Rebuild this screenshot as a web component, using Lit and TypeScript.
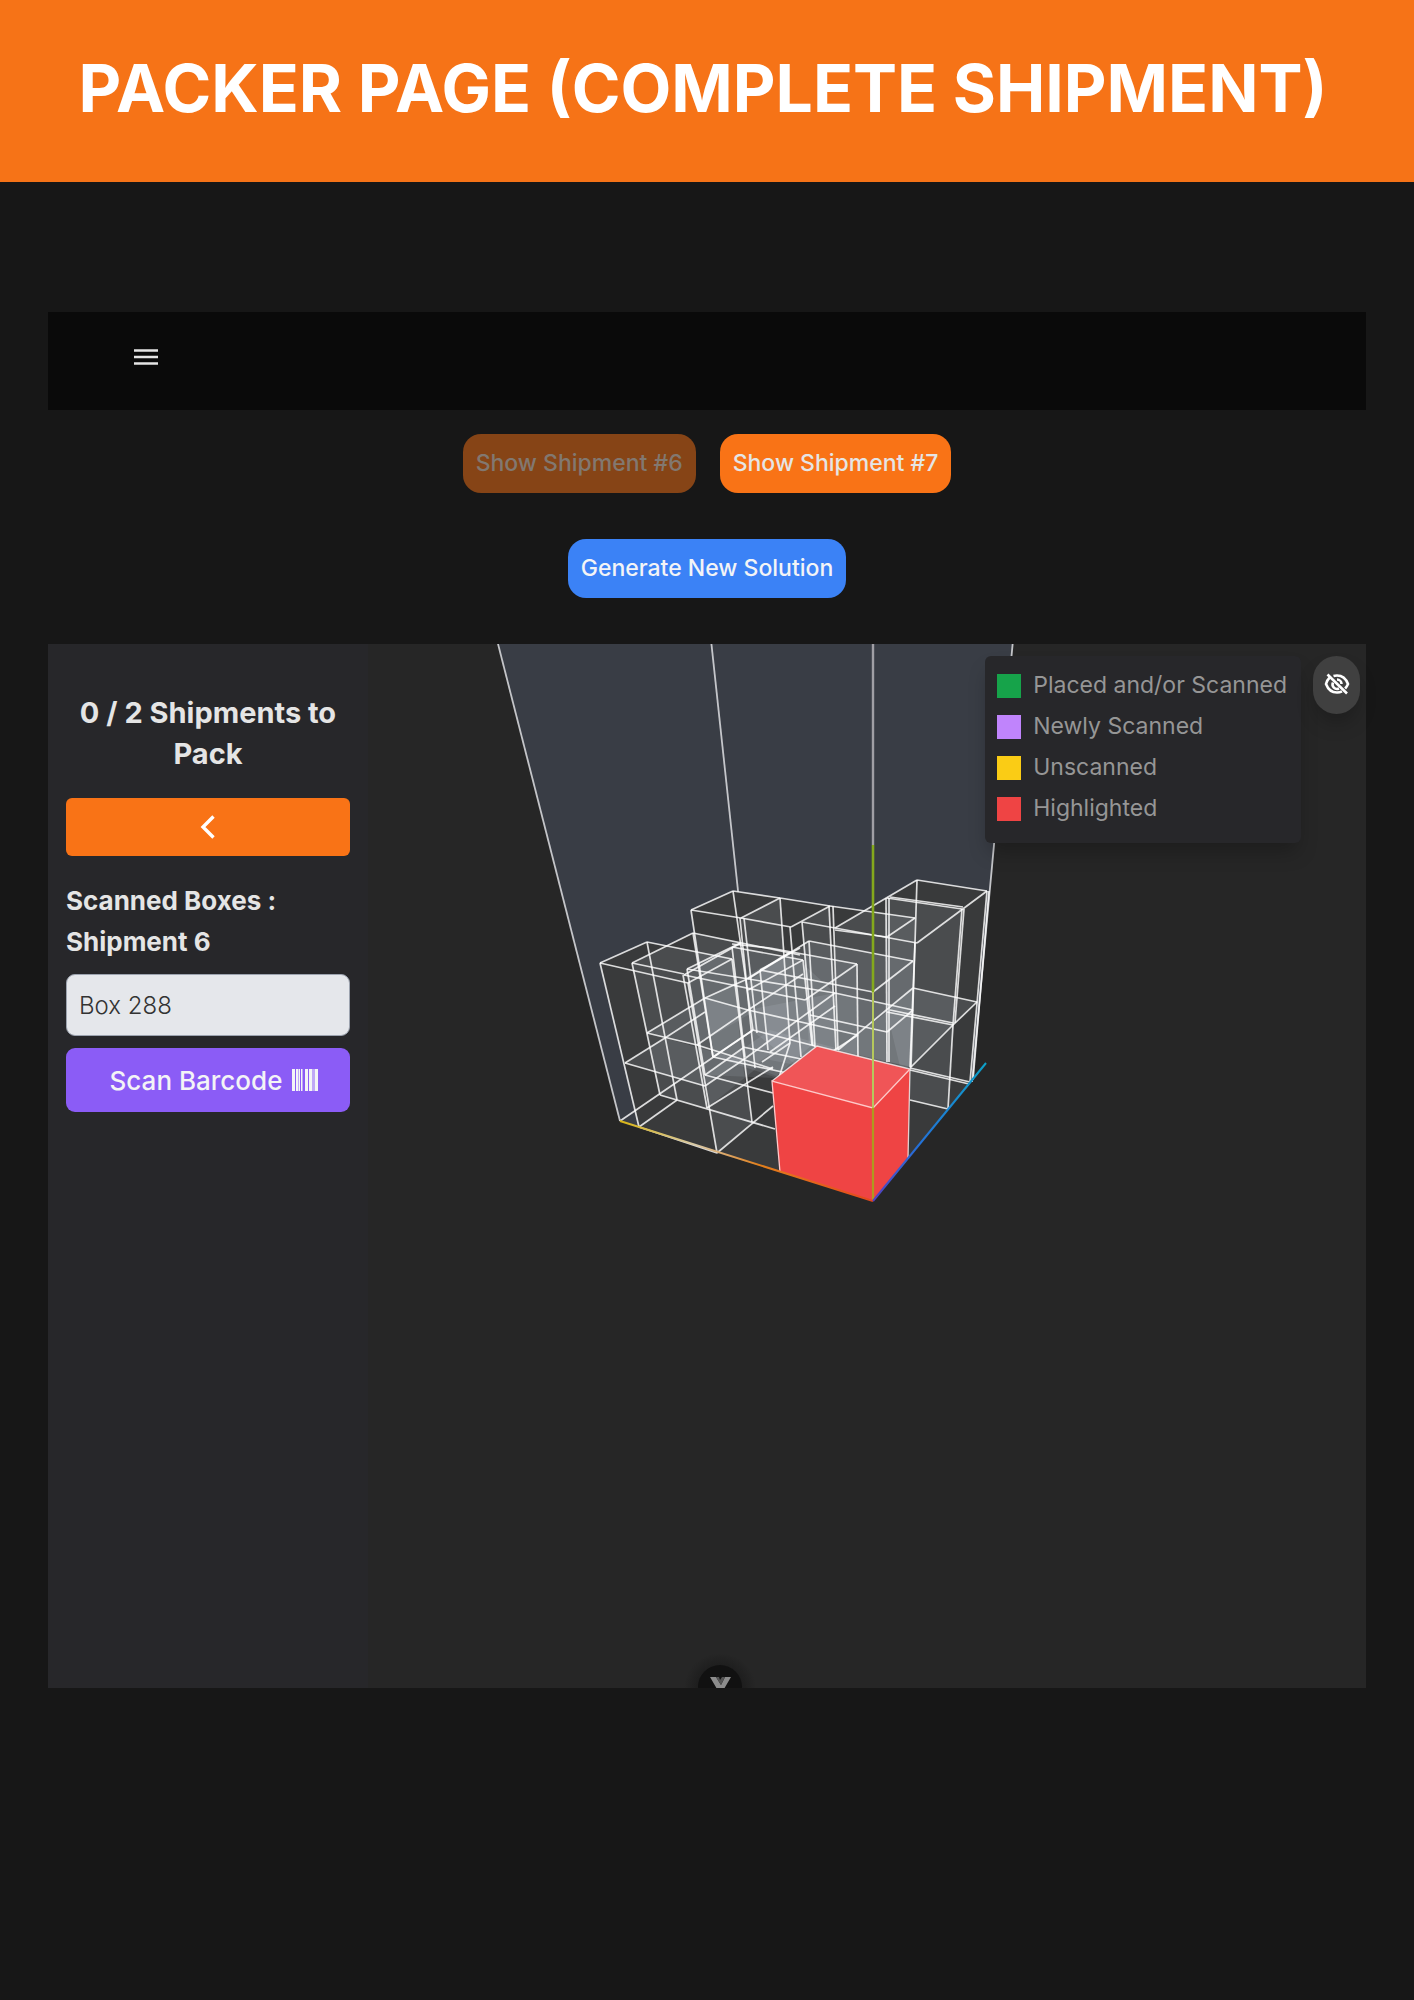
import { LitElement, html, svg, css } from "lit";
import { customElement, state } from "lit/decorators.js";

type Segment = [number, number, number, number];

/** Shades of the container walls, drawn behind every box. */
const WALLS = "497,640 1013,640 972,1082 948,1109 873,1201 620,1121";

/** Outline of each translucent box in scene coordinates. */
const BOXES: string[] = [
  "600,963 647,942 732,959 742,1060 705,1086 625,1063",
  "625,1063 665,1038 742,1060 752,1122 717,1153 639,1127",
  "632,963 693,933 743,943 753,1012 697,1045 647,1033",
  "647,1033 705,998 748,1010 757,1068 707,1108 660,1095",
  "687,969 732,947 803,960 812,1045 774,1078 705,1075",
  "705,1075 770,1030 836,1048 836,1060 780,1172 717,1153",
  "691,910 733,891 780,898 790,1042 752,1066 713,1057",
  "741,918 780,898 830,906 836,1048 800,1068 755,1033",
  "802,922 830,906 915,918 911,1067 888,1062 809,1046",
  "835,928 887,898 962,909 953,1025 911,1067 838,1050",
  "887,898 917,880 987,891 977,1002 953,1025 887,1012",
  "887,1012 913,988 977,1002 971,1082 948,1109 908,1100",
  "838,1050 887,1012 953,1025 948,1109 908,1159 873,1100",
  "760,970 809,941 913,961 911,1067 873,1080 770,1060",
  "748,982 790,952 857,964 858,1057 805,1080 755,1063",
  "705,998 790,952 835,993 838,1050 790,1082 713,1057",
  "748,1010 835,993 913,1010 911,1067 790,1082 757,1068",
];

const WALL_EDGES: Segment[] = [
  [497, 640, 620, 1121],
  [711, 640, 753, 1030],
  [1013, 640, 972, 1082],
];

const EDGES: Segment[] = [
  // front left stack
  [600, 963, 647, 942], [647, 942, 732, 959], [732, 959, 688, 983], [688, 983, 600, 963],
  [600, 963, 639, 1127], [647, 942, 677, 1100], [732, 959, 752, 1122], [688, 983, 717, 1153],
  [639, 1127, 677, 1100], [639, 1127, 717, 1153], [717, 1153, 773, 1106],
  [625, 1063, 705, 1086], [625, 1063, 665, 1038], [705, 1086, 743, 1060],
  // second stack
  [632, 963, 693, 933], [693, 933, 800, 955], [632, 963, 684, 974], [684, 975, 741, 943],
  [632, 963, 660, 1095], [693, 933, 713, 1057], [683, 975, 707, 1108],
  [660, 1095, 775, 1129], [647, 1033, 697, 1045], [697, 1045, 773, 1069],
  [647, 1033, 705, 998], [705, 998, 745, 980], [745, 980, 790, 952],
  [665, 1038, 705, 1012], [707, 1108, 773, 1067],
  [620, 1121, 753, 1030],
  // centre
  [687, 969, 732, 947], [687, 969, 835, 993], [684, 975, 805, 1000],
  [687, 969, 705, 1075], [732, 947, 740, 943], [732, 947, 803, 960], [732, 947, 745, 1057],
  [705, 998, 748, 1010], [748, 1010, 858, 1035], [697, 1045, 748, 1010], [748, 1010, 803, 974],
  [713, 1057, 753, 1030], [753, 1030, 815, 1046], [743, 1047, 806, 1060], [713, 1057, 787, 1073],
  [705, 1075, 773, 1093], [705, 1075, 743, 1048], [743, 1060, 835, 993],
  [760, 970, 800, 948], [760, 970, 768, 1050],
  // back row
  [691, 910, 733, 891], [733, 891, 780, 898], [780, 898, 830, 906],
  [691, 910, 741, 918], [741, 918, 791, 927], [741, 918, 780, 898], [791, 927, 830, 906],
  [691, 910, 713, 1057], [733, 891, 753, 1030], [740, 918, 755, 1068], [744, 918, 757, 1033],
  [780, 898, 790, 1043], [790, 927, 801, 1057], [802, 922, 813, 1046],
  [830, 906, 915, 918], [915, 918, 887, 937], [835, 930, 887, 937], [802, 922, 835, 928],
  [829, 906, 836, 1050], [833, 906, 838, 1050],
  // centre right
  [809, 941, 913, 961], [809, 941, 748, 979], [913, 961, 873, 992], [873, 992, 760, 970],
  [770, 948, 857, 964], [732, 944, 770, 948], [857, 964, 805, 1000], [857, 964, 858, 1057],
  [803, 960, 812, 1045], [803, 960, 748, 990], [809, 941, 815, 1047],
  [835, 993, 913, 1010], [913, 1010, 887, 1032],
  [887, 1032, 810, 1015], [858, 1035, 800, 1072], [913, 988, 838, 1050],
  [770, 1052, 835, 1006], [775, 1090, 790, 1043], [790, 1043, 762, 1062],
  // tall stack on the right
  [917, 880, 987, 891], [987, 891, 917, 943], [917, 880, 835, 928], [835, 928, 917, 943],
  [887, 898, 962, 909], [890, 897, 963, 907],
  [917, 880, 911, 1067], [915, 943, 910, 1067],
  [886, 898, 887, 1062], [889, 898, 889, 1062],
  [987, 891, 970, 1082], [989, 891, 973, 1080], [962, 909, 953, 1025], [964, 909, 955, 1023],
  [953, 1025, 948, 1109],
  [913, 988, 977, 1002], [887, 1012, 953, 1025], [890, 1010, 953, 1023],
  [977, 1002, 953, 1025], [953, 1025, 910, 1068],
  [910, 1068, 970, 1082], [910, 1070, 969, 1084], [910, 1100, 948, 1109],
];

@customElement("shipment-scene")
class ShipmentScene extends LitElement {
  static styles = css`
    :host { display: block; }
    .scene { display: block; width: 100%; height: auto; }
    .wall { fill: #393d45; }
    .mask { fill: #262626; }
    .box { fill: #dfe9f2; fill-opacity: 0.1; }
    .edge { stroke: #fff; stroke-opacity: 0.82; stroke-width: 1.7; }
    .wall-edge { stroke: #d4d5d8; stroke-opacity: 0.9; stroke-width: 1.8; }
    .axis { fill: none; stroke-width: 2; }
  `;

  private line(s: Segment, name: string) {
    return svg`<line class=${name} x1=${s[0]} y1=${s[1]} x2=${s[2]} y2=${s[3]}></line>`;
  }

  render() {
    return html`
      <svg class="scene" viewBox="368 644 998 1044" role="img" aria-label="Packing view">
        <defs>
          <linearGradient id="x-axis" gradientUnits="userSpaceOnUse" x1="873" y1="1201" x2="620" y2="1121">
            <stop offset="0" stop-color="#e4461c" />
            <stop offset="0.45" stop-color="#e2801c" />
            <stop offset="0.7" stop-color="#d8c9a8" />
            <stop offset="1" stop-color="#d8b414" />
          </linearGradient>
          <linearGradient id="z-axis" gradientUnits="userSpaceOnUse" x1="873" y1="1201" x2="986" y2="1063">
            <stop offset="0" stop-color="#5440c0" />
            <stop offset="0.4" stop-color="#2470d8" />
            <stop offset="1" stop-color="#0ca0c8" />
          </linearGradient>
          <radialGradient id="badge-glow">
            <stop offset="0.55" stop-color="#1c1c1c" />
            <stop offset="1" stop-color="#1c1c1c" stop-opacity="0" />
          </radialGradient>
        </defs>
        <polygon class="wall" points=${WALLS}></polygon>
        ${WALL_EDGES.map((s) => this.line(s, "wall-edge"))}
        <line x1="873" y1="640" x2="873" y2="845" stroke="#a09fa5" stroke-width="2.4" />
        ${BOXES.map((p) => svg`<polygon class="mask" points=${p}></polygon>`)}
        ${BOXES.map((p) => svg`<polygon class="box" points=${p}></polygon>`)}
        ${EDGES.map((s) => this.line(s, "edge"))}
        <polygon fill="#ef4444" points="772,1081 873,1108 910,1069 908,1159 873,1201 780,1172" />
        <polygon fill="#f05557" points="772,1081 817,1046 910,1069 873,1108" />
        <polyline points="772,1081 817,1046 910,1069 908,1159" fill="none" stroke="#fff" stroke-opacity="0.75" stroke-width="1.3" />
        <polyline points="780,1172 772,1081 873,1108 910,1069" fill="none" stroke="#ffc9c9" stroke-width="1.3" />
        <line x1="873" y1="845" x2="873" y2="992" stroke="#84a91c" stroke-width="2.6" />
        <line x1="873" y1="992" x2="873" y2="1108" stroke="#b5c85c" stroke-width="2" />
        <line x1="873" y1="1108" x2="873" y2="1200" stroke="#ae9a1e" stroke-width="2.2" />
        <line class="axis" x1="873" y1="1201" x2="620" y2="1121" stroke="url(#x-axis)" />
        <line class="axis" x1="873" y1="1201" x2="986" y2="1063" stroke="url(#z-axis)" />
        <circle cx="720" cy="1689" r="36" fill="url(#badge-glow)" />
        <circle cx="720" cy="1687" r="22" fill="#111" />
        <path d="M710 1677h6l5 8 4-8h6l-7 12h-7z" fill="#8c8c8c" />
        <path d="M716 1677l5 8 4-8h-3l-2 3-1-3z" fill="#555" />
      </svg>
    `;
  }
}

@customElement("app-root")
class AppRoot extends LitElement {
  static styles = css`
    :host {
      display: block;
      min-height: 100vh;
      background: #171717;
      color: #e5e5e5;
      font-family: Inter, "Liberation Sans", sans-serif;
      font-size: 24px;
      line-height: 41px;
    }
    * { box-sizing: border-box; }
    h1, h2, h3, ul, p { margin: 0; padding: 0; }
    button, input { font: inherit; color: inherit; border: 0; margin: 0; }
    button { cursor: pointer; }
    .banner {
      background: #f67317;
      color: #fff;
      padding: 44px 56px 50px 48px;
      text-align: center;
    }
    .banner-title { font-size: 66px; line-height: 88px; font-weight: 700; white-space: nowrap; }
    .page { padding: 130px 48px 0; }
    .navbar { background: #0a0a0a; padding: 30px 84px 38px; display: flex; }
    .menu { background: none; padding: 0; width: 28px; height: 30px; display: grid; place-items: center; }
    .actions { display: flex; justify-content: center; flex-wrap: wrap; gap: 24px; }
    .shipments { padding: 24px 0 46px; }
    .generate { padding-bottom: 46px; }
    .pill { height: 59px; padding: 0 13px; border-radius: 18px; font-size: 23px; font-weight: 500; background: #f97316; }
    .pill:disabled { background: #864416; color: #827870; }
    .pill.blue { background: #3b82f6; color: #f3f4f6; }
    .workspace { display: grid; grid-template-columns: 320px minmax(0, 1fr); background: #262626; }
    .sidebar { background: #27272a; padding: 48px 18px; }
    .progress { font-size: 29px; font-weight: 700; text-align: center; }
    .back {
      display: grid; place-items: center; width: 100%; height: 58px; margin: 24px 0;
      border-radius: 6px; background: #f97316; color: #fff; padding: 0;
    }
    .scanned-title { font-size: 26px; font-weight: 700; }
    .box-input {
      display: block; width: 100%; height: 62px; margin: 12px 0; padding: 0 12px;
      background: #e5e7eb; border: 1px solid #9ca3af; border-radius: 9px; color: #333; font-weight: 300;
    }
    .scan {
      display: flex; align-items: center; justify-content: center; gap: 10px;
      width: 100%; height: 64px; padding: 0 0 0 12px; border-radius: 9px;
      background: #8b5cf6; color: #f3f4f6; font-size: 26px; font-weight: 500;
    }
    .viewport { position: relative; }
    .overlay { position: absolute; top: 12px; right: 6px; display: flex; align-items: flex-start; gap: 12px; }
    .legend {
      list-style: none; padding: 9px 14px 14px 12px; border-radius: 6px; background: #27272a;
      color: #969696; font-size: 23px; box-shadow: 0 12px 20px -4px rgba(0, 0, 0, 0.25);
    }
    .legend-item { display: flex; align-items: center; gap: 12px; }
    .swatch { width: 24px; height: 24px; }
    .placed { background: #16a34a; }
    .newly { background: #c084fc; }
    .unscanned { background: #facc15; }
    .highlighted { background: #ef4444; }
    .toggle {
      display: grid; place-items: center; width: 47px; height: 58px; padding: 0 0 2px; border-radius: 24px;
      background: #404040; color: #fff; box-shadow: 0 12px 20px -4px rgba(0, 0, 0, 0.25);
    }
  `;

  @state() private legendOpen = true;
  @state() private shipment = 6;

  private legend = [
    { kind: "placed", label: "Placed and/or Scanned" },
    { kind: "newly", label: "Newly Scanned" },
    { kind: "unscanned", label: "Unscanned" },
    { kind: "highlighted", label: "Highlighted" },
  ];

  render() {
    return html`
      <header class="banner"><h1 class="banner-title">PACKER PAGE (COMPLETE SHIPMENT)</h1></header>
      <div class="page">
        <nav class="navbar">
          <button class="menu" aria-label="Menu">
            <svg width="24" height="18" viewBox="0 0 24 18" stroke="#e5e5e5" stroke-width="2.4">
              <path d="M0 2.500h24M0 9h24M0 15.500h24" />
            </svg>
          </button>
        </nav>
        <div class="actions shipments">
          ${[6, 7].map(
            (n) => html`<button class="pill" ?disabled=${this.shipment === n} @click=${() => (this.shipment = n)}>Show Shipment #${n}</button>`
          )}
        </div>
        <div class="actions generate"><button class="pill blue">Generate New Solution</button></div>
        <main class="workspace">
          <aside class="sidebar">
            <h2 class="progress">0 / 2 Shipments to Pack</h2>
            <button class="back" aria-label="Previous shipment">
              <svg width="16" height="26" viewBox="0 0 16 26" fill="none" stroke="currentColor" stroke-width="3.4">
                <path d="M13.500 2.500L3 13l10.500 10.500" />
              </svg>
            </button>
            <h3 class="scanned-title">Scanned Boxes :<br />Shipment ${this.shipment}</h3>
            <input class="box-input" type="text" aria-label="Scanned box" .value=${"Box 288"} />
            <button class="scan">
              Scan Barcode
              <svg width="26" height="22" viewBox="0 0 26 22" fill="currentColor">
                <path d="M0 0h3v22H0zM4 0h2v22H4zM6.500 0h1.500v22H6.500zM9 0h1.500v22H9zM13 0h3v22h-3zM17 0h3.500v22H17zM21.500 0h1v22h-1zM23 0h3v22h-3z" />
              </svg>
            </button>
          </aside>
          <section class="viewport">
            <shipment-scene></shipment-scene>
            <div class="overlay">
              ${this.legendOpen
                ? html`<ul class="legend">
                    ${this.legend.map(
                      (l) => html`<li class="legend-item"><span class="swatch ${l.kind}"></span>${l.label}</li>`
                    )}
                  </ul>`
                : null}
              <button class="toggle" aria-label="Toggle legend" @click=${() => (this.legendOpen = !this.legendOpen)}>
                <svg width="26" height="22" viewBox="0 0 26 22" fill="none" stroke="currentColor" stroke-width="2.600">
                  <path d="M9.500 3.100A12 12 0 0 1 13 2.500c5 0 9 3.200 11 8.500-.7 1.700-1.700 3.200-2.900 4.500M5.500 4.800C3.900 6.300 2.700 8.500 2 11c2 5.300 6 8.500 11 8.500 1.800 0 3.500-.4 5-1.200" />
                  <path d="M9 9.500a4.500 4.500 0 0 0 6 6M13 6.500a4.500 4.500 0 0 1 4.500 4.500" />
                  <path d="M3.500 1.500L23 20.500" />
                </svg>
              </button>
            </div>
          </section>
        </main>
      </div>
    `;
  }
}
